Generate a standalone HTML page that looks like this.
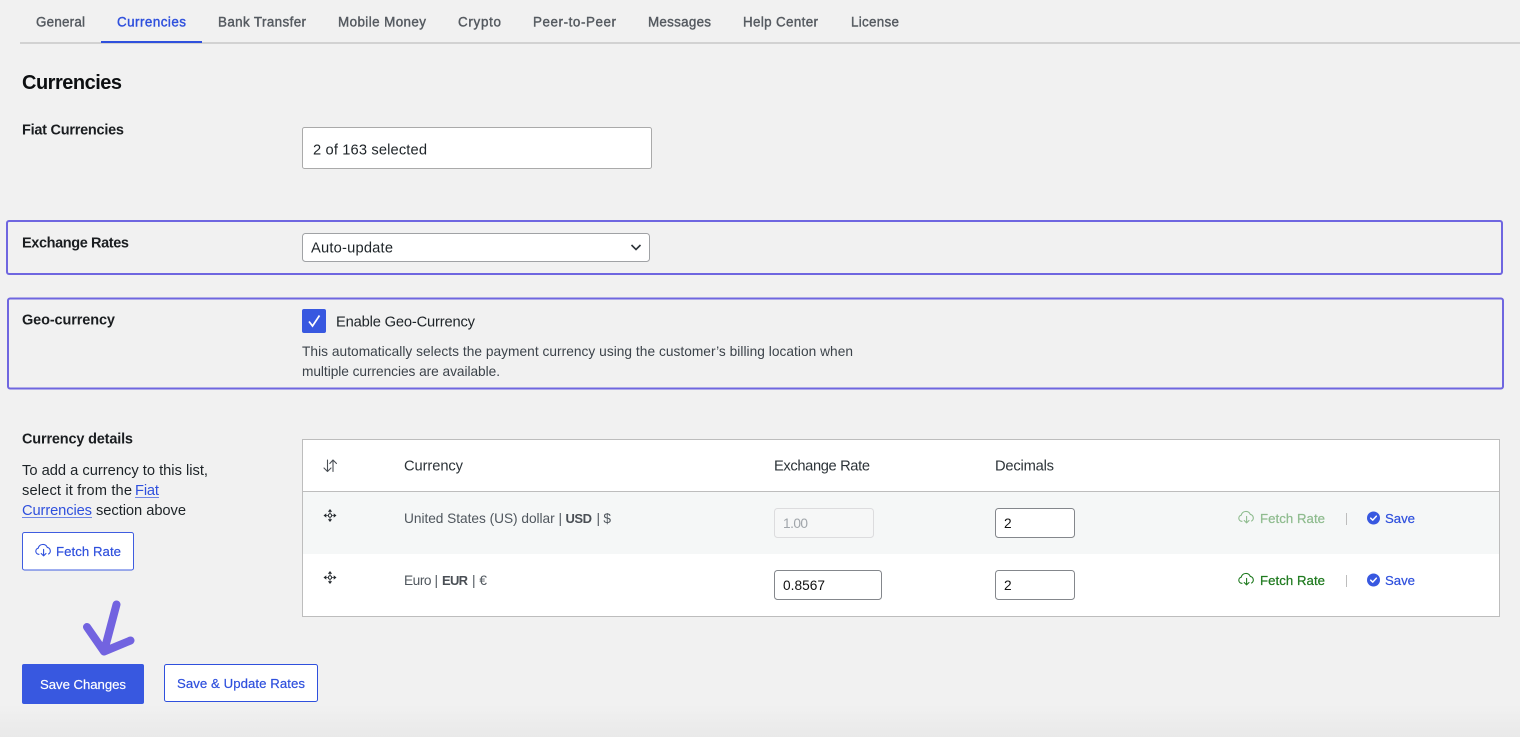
<!DOCTYPE html>
<html lang="en"><head><meta charset="utf-8"><title>Currencies</title>
<style>
html,body{margin:0;padding:0;width:1520px;height:737px;overflow:hidden;background:#f1f1f1}
svg{display:block}
text{font-family:"Liberation Sans",sans-serif;font-size:14.7px;fill:#1d2327;white-space:pre}
.tab{font-size:13.4px;fill:#555a60;stroke:#555a60;stroke-width:.4}
.b{font-weight:bold;fill:#1a1d20;font-size:14.5px}
.s{font-size:13.7px;fill:#50575e}
.sb{font-size:13px;font-weight:bold;fill:#4a4f55}
.bl{font-size:13.2px;fill:#2f50dd;stroke:#2f50dd;stroke-width:.2}
.gr{font-size:13.2px;fill:#1f7a1f;stroke:#1f7a1f;stroke-width:.25}
.grl{font-size:13.2px;fill:#8fbc8f;stroke:#8fbc8f;stroke-width:.25}
</style></head><body>
<svg width="1520" height="737" viewBox="0 0 1520 737" xmlns="http://www.w3.org/2000/svg">
<defs>
<linearGradient id="g" x1="0" y1="0" x2="0" y2="1"><stop offset="0" stop-color="#f1f1f1"/><stop offset="1" stop-color="#e9e9e9"/></linearGradient>
<g id="cloud" fill="none" stroke-width="1.1" stroke-linecap="round" stroke-linejoin="round">
<path d="M4 11.300H3.600A3.100 3.100 0 0 1 3.200 5.200 4.800 4.800 0 0 1 12.300 4.400 3.600 3.600 0 0 1 13.600 11"/>
<path d="M8.600 6.400V12.800M6.200 10.500L8.600 12.900 11 10.500"/>
</g>
<g id="move" fill="#23282d">
<rect x="6" y="1.500" width="1" height="10" opacity=".7"/><rect x="1.500" y="6" width="10" height="1" opacity=".7"/>
<path d="M6.500 0L8.600 2.800H4.400zM6.500 13L8.600 10.200H4.400zM0 6.500L2.800 4.400V8.600zM13 6.500L10.200 4.400V8.600z"/>
<circle cx="6.500" cy="6.500" r="1.700" fill="#fff" stroke="#23282d"/>
</g>
<g id="chk">
<circle cx="6.500" cy="6.500" r="6.500" fill="#3858e0"/>
<path d="M3.700 6.700L5.700 8.600 9.300 4.700" fill="none" stroke="#fff" stroke-width="1.500" stroke-linecap="round" stroke-linejoin="round"/>
</g>
</defs>

<rect width="1520" height="737" fill="#f1f1f1"/>
<rect y="705" width="1520" height="32" fill="url(#g)"/>

<!-- tabs -->
<rect x="20" y="42" width="1500" height="2" fill="#d2d2d2"/>
<rect x="101" y="41" width="101" height="2" fill="#2f50dd"/>
<text class="tab" x="36" y="26.500" textLength="49">General</text>
<text class="tab" x="117" y="26.500" textLength="69" style="fill:#2f50dd;stroke:#2f50dd">Currencies</text>
<text class="tab" x="218" y="26.500" textLength="88">Bank Transfer</text>
<text class="tab" x="338" y="26.500" textLength="88">Mobile Money</text>
<text class="tab" x="458" y="26.500" textLength="43">Crypto</text>
<text class="tab" x="533" y="26.500" textLength="83">Peer-to-Peer</text>
<text class="tab" x="648" y="26.500" textLength="63">Messages</text>
<text class="tab" x="743" y="26.500" textLength="75">Help Center</text>
<text class="tab" x="851" y="26.500" textLength="48">License</text>

<text x="22" y="89" textLength="100" style="font-size:20px;font-weight:bold;fill:#0d0f11">Currencies</text>

<text class="b" x="22" y="134.500" textLength="102">Fiat Currencies</text>
<rect x="302.500" y="127.500" width="349" height="41" rx="2" fill="#fff" stroke="#aaaaaa"/>
<text x="313" y="154.500" textLength="114">2 of 163 selected</text>

<!-- Exchange rates -->
<rect x="7" y="221" width="1495" height="53" rx="2" fill="none" stroke="#6f66e0" stroke-width="2"/>
<text class="b" x="22" y="247.500" textLength="107">Exchange Rates</text>
<rect x="302.500" y="233.500" width="347" height="28" rx="3" fill="#fff" stroke="#a0a2a5"/>
<text x="311" y="252.500" textLength="82">Auto-update</text>
<path d="M631.500 245L636 249.500 640.500 245" fill="none" stroke="#2c3338" stroke-width="1.600"/>

<!-- Geo -->
<rect x="8" y="298.500" width="1495" height="90" rx="2" fill="none" stroke="#6f66e0" stroke-width="2"/>
<text class="b" x="22" y="324.500" textLength="93">Geo-currency</text>
<rect x="302" y="309" width="24" height="24" rx="2" fill="#3858e0"/>
<path d="M309 321.500L312.500 326 319.500 315.500" fill="none" stroke="#fff" stroke-width="1.700"/>
<text x="336" y="326.500" textLength="139">Enable Geo-Currency</text>
<text class="s" x="302" y="356" textLength="551" style="fill:#3c434a">This automatically selects the payment currency using the customer’s billing location when</text>
<text class="s" x="302" y="376" textLength="198" style="fill:#3c434a">multiple currencies are available.</text>

<!-- Currency details side -->
<text class="b" x="22" y="443.500" textLength="111">Currency details</text>
<text x="22" y="475" textLength="186">To add a currency to this list,</text>
<text x="22" y="495" textLength="110">select it from the</text>
<text x="135" y="495" textLength="24" style="fill:#2f50dd">Fiat</text>
<rect x="135" y="497" width="24" height="1" fill="#6f86e6"/>
<text x="22" y="515" textLength="70" style="fill:#2f50dd">Currencies</text>
<rect x="22" y="517" width="70" height="1" fill="#6f86e6"/>
<text x="96" y="515" textLength="90">section above</text>
<rect x="22.500" y="532.500" width="111" height="37.500" rx="2" fill="#fff" stroke="#3f5de0"/>
<use href="#cloud" x="35" y="543" stroke="#2f50dd"/>
<text class="bl" x="56" y="556" textLength="65">Fetch Rate</text>

<!-- table -->
<rect x="302.500" y="439.500" width="1197" height="177" fill="#fff" stroke="#bdbdbd"/>
<rect x="303" y="492" width="1196" height="62" fill="#f5f7f7"/>
<rect x="303" y="491" width="1196" height="1" fill="#bdbdbd"/>
<g fill="none" stroke="#4a4f55" stroke-width="1.100" stroke-linecap="round" stroke-linejoin="round">
<path d="M327.500 460V471.500M324 468L327.500 471.500 331 468"/>
<path d="M333 471.500V460M329.800 463.500L333 460 336.500 463.500"/>
</g>
<text x="404" y="470.500" textLength="59" style="fill:#2c3338">Currency</text>
<text x="774" y="470.500" textLength="96" style="fill:#2c3338">Exchange Rate</text>
<text x="995" y="470.500" textLength="59" style="fill:#2c3338">Decimals</text>

<use href="#move" x="323.500" y="509"/>
<text class="s" x="404" y="523" textLength="158">United States (US) dollar |</text>
<text class="sb" x="565.500" y="523" textLength="26.500">USD</text>
<text class="s" x="596.500" y="523" textLength="14.500">| $</text>
<rect x="774.500" y="508.500" width="99" height="29" rx="3" fill="#f6f7f7" stroke="#dcdcde"/>
<text x="783" y="528" textLength="25" style="fill:#a0a5aa;font-size:13.700px">1.00</text>
<rect x="995.500" y="508.500" width="79" height="29" rx="3" fill="#fff" stroke="#84878c"/>
<text x="1004" y="528" style="font-size:13.700px;fill:#111">2</text>
<use href="#cloud" x="1238" y="510" stroke="#8fbc8f"/>
<text class="grl" x="1260" y="523" textLength="65">Fetch Rate</text>
<rect x="1346" y="513" width="1" height="12" fill="#bdbdbd"/>
<use href="#chk" x="1367" y="511.500"/>
<text class="bl" x="1385" y="523" textLength="30">Save</text>

<use href="#move" x="323.500" y="571"/>
<text class="s" x="404" y="585" textLength="34">Euro |</text>
<text class="sb" x="442" y="585" textLength="26">EUR</text>
<text class="s" x="472" y="585" textLength="15">| €</text>
<rect x="774.500" y="570.500" width="107" height="29" rx="3" fill="#fff" stroke="#84878c"/>
<text x="783" y="590" textLength="42" style="font-size:13.700px;fill:#111">0.8567</text>
<rect x="995.500" y="570.500" width="79" height="29" rx="3" fill="#fff" stroke="#84878c"/>
<text x="1004" y="590" style="font-size:13.700px;fill:#111">2</text>
<use href="#cloud" x="1238" y="572" stroke="#1f7a1f"/>
<text class="gr" x="1260" y="585" textLength="65">Fetch Rate</text>
<rect x="1346" y="575" width="1" height="12" fill="#bdbdbd"/>
<use href="#chk" x="1367" y="573.500"/>
<text class="bl" x="1385" y="585" textLength="30">Save</text>

<!-- arrow -->
<path d="M116.500 604.500L104 651.500M87 627L104 651.500 130.500 640.500" fill="none" stroke="#7263e0" stroke-width="8" stroke-linecap="round" stroke-linejoin="round"/>

<!-- buttons -->
<rect x="22" y="664" width="122" height="40" rx="2" fill="#3858e0"/>
<text x="40" y="689" textLength="86" style="font-size:13.200px;fill:#fff;stroke:#fff;stroke-width:.15">Save Changes</text>
<rect x="164.500" y="664.500" width="153" height="37" rx="2" fill="#fff" stroke="#2f50dd"/>
<text class="bl" x="177" y="688" textLength="128">Save &amp; Update Rates</text>
</svg>
</body></html>
